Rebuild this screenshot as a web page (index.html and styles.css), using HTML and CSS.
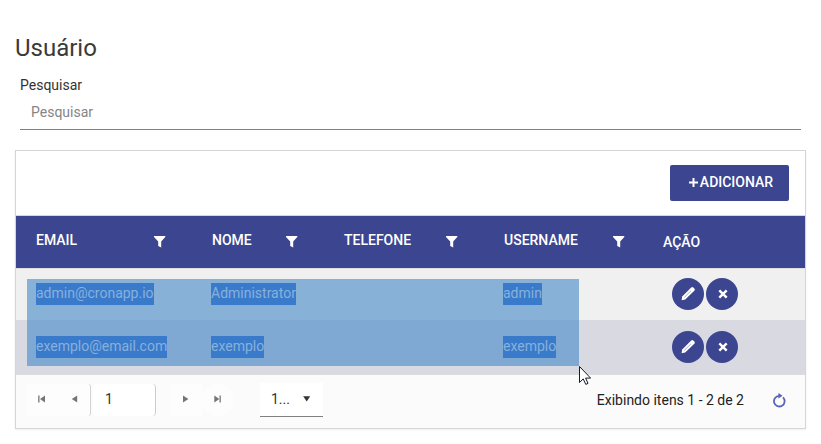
FILE: index.html
```html
<!DOCTYPE html>
<html lang="pt-BR">
<head>
<meta charset="utf-8">
<title>Usuário</title>
<link rel="stylesheet" href="styles.css">
</head>
<body>
<svg class="defs" aria-hidden="true">
  <symbol id="filter" viewBox="0 0 12 12"><path d="M0 0h11.3v1.1L7.2 5.4v6.2L4.2 10V5.4L0 1.1z"/></symbol>
  <symbol id="pencil" viewBox="0 0 14 14"><path d="M10.2.6a1.5 1.5 0 0 1 2.1 0l1 1a1.5 1.5 0 0 1 0 2.1L4.2 12.5.6 13.3l.6-3.8z"/><path class="core" d="M3.3 10.4l6.7-6.6"/></symbol>
  <symbol id="times" viewBox="0 0 10 10"><path d="M1.3 1.3l7.4 7.4M8.7 1.3l-7.4 7.4"/></symbol>
</svg>
<h1>Usuário</h1>
<div class="search">
  <label for="q">Pesquisar</label>
  <input id="q" type="text" placeholder="Pesquisar">
</div>
<main class="grid">
  <div class="toolbar"><button class="add"><svg width="9" height="9" viewBox="0 0 9 9"><path d="M4.5 0v9M0 4.5h9"/></svg>ADICIONAR</button></div>
  <div class="row head">
    <div>EMAIL<svg><use href="#filter"/></svg></div>
    <div>NOME<svg><use href="#filter"/></svg></div>
    <div>TELEFONE<svg><use href="#filter"/></svg></div>
    <div>USERNAME<svg><use href="#filter"/></svg></div>
    <div class="act">AÇÃO</div>
  </div>
  <div class="rows">
    <div class="row one">
      <div><span>admin@cronapp.io</span></div><div><span>Administrator</span></div><div></div><div><span>admin</span></div>
      <div class="buttons"><button><svg class="pen"><use href="#pencil"/></svg></button><button><svg class="x"><use href="#times"/></svg></button></div>
    </div>
    <div class="row two">
      <div><span>exemplo@email.com</span></div><div><span>exemplo</span></div><div></div><div><span>exemplo</span></div>
      <div class="buttons"><button><svg class="pen"><use href="#pencil"/></svg></button><button><svg class="x"><use href="#times"/></svg></button></div>
    </div>
    <div class="marquee"></div>
    <svg class="cursor" viewBox="0 0 12 19"><path d="M.5.5v16l3.7-3.6 2.6 5.5 2.2-1-2.4-5.3h5z"/></svg>
  </div>
  <div class="pager">
    <div class="prev">
      <svg viewBox="0 0 32 32"><path d="M12.2 11.5h1.3v7h-1.3zM19 11.5v7l-5-3.5z"/></svg>
      <svg viewBox="0 0 32 32"><path d="M19.2 11.5v7l-5.4-3.5z"/></svg>
    </div>
    <div class="page">1</div>
    <div class="next">
      <svg viewBox="0 0 32 32"><path d="M13 11.5v7l5.4-3.5z"/></svg>
      <svg class="last" viewBox="0 0 32 32"><path d="M12.3 11.5v7l5-3.5zM17.5 11.5h1.3v7h-1.3z"/></svg>
    </div>
    <div class="size">1...<svg viewBox="0 0 8 6"><path d="M.2.2h7L3.7 5.6z"/></svg></div>
    <div class="info">Exibindo itens 1 - 2 de 2</div>
    <svg class="refresh" viewBox="0 0 14 15"><path d="M11 4.4A5.3 5.3 0 1 1 7.2 2.9"/><path class="tip" d="M6.4 0l4.2 2.7-4.2 2.8z"/></svg>
  </div>
</main>
</body>
</html>
```
FILE: styles.css
```css
* { box-sizing: border-box; }
body { margin: 0; padding: 33px 15px 0; width: 821px; height: 444px; overflow: hidden; background: #fff; color: #333; font: 14px/20px Roboto, sans-serif; }
.defs { display: none; }
h1 { margin: 0; font-size: 24px; line-height: 30px; font-weight: 400; color: #3a3a3a; }
.search { margin: 12px 5px 0; display: flex; flex-direction: column; }
input { height: 35px; padding: 0 11px; border: 0; border-bottom: 1px solid #808080; outline: 0; font: inherit; background: none; }
input::placeholder { color: #858585; }
.grid { margin-top: 20px; width: 791px; height: 279px; border: 1px solid #d5d5d5; box-shadow: 0 1px 2px #0001; }
.toolbar { height: 65px; padding: 14px 16px 0; display: flex; justify-content: flex-end; border-bottom: 1px solid #d8d8d8; }
button { border: 0; background: #3c458f; color: #fff; font: 14px/20px Roboto, sans-serif; }
.add { width: 119px; height: 36px; border-radius: 2px; font-weight: 500; display: flex; align-items: center; justify-content: center; gap: 2px; padding: 0 0 2px 3px; }
.add svg { stroke: #fff; stroke-width: 2; }
.row { display: grid; grid-template-columns: 175px 133px 160px 167px 1fr; }
.head { height: 52px; background: #3c458f; color: #fff; font-weight: 500; }
.head div { display: flex; justify-content: space-between; padding: 14px 25px 0 20px; }
.head div:nth-child(2) { padding-left: 21px; padding-right: 26px; }
.head div:nth-child(3), .head div:nth-child(4) { padding-right: 26px; }
.head .act { padding: 16px 0 0 12px; }
.head svg { width: 12px; height: 12px; fill: #fff; margin-top: 6px; }
.rows { position: relative; }
.one { height: 52px; background: #f0f0f0; border-top: 1px solid #dedee3; }
.two { height: 54px; background: #d9d9e2; }
.row > div { min-width: 0; }
.one > div, .two > div { padding: 14px 0 0 20px; }
.one > div:nth-child(4), .two > div:nth-child(4) { padding-left: 19px; }
.two > div { padding-top: 16px; }
.row span { position: relative; z-index: 2; display: inline-block; height: 22px; line-height: 21px; background: #3a7acb; color: #86b1dc; }
.row > .buttons { display: flex; gap: 2px; padding: 9px 0 0 21px; }
.two > .buttons { padding-top: 11px; }
.buttons button { width: 32px; height: 32px; border-radius: 50%; padding: 0; display: grid; place-items: center; }
.pen { width: 14px; height: 14px; fill: #fff; }
.core { stroke: #aaafd0; stroke-width: 1; }
.x { width: 10px; height: 10px; stroke: #fff; stroke-width: 2.4; margin-left: 1px; }
.marquee { position: absolute; z-index: 1; left: 11px; top: 11px; width: 552px; height: 87px; background: rgba(67,135,200,.6); }
.cursor { position: absolute; z-index: 3; left: 563px; top: 98px; width: 12px; height: 19px; fill: #fff; stroke: #181828; }
.pager { height: 54px; background: #fbfbfb; border-top: 1px solid #ddd; display: flex; align-items: center; padding: 0 19px 3px 10px; }
.prev, .next { display: flex; height: 32px; background: #fdfdfd; }
.prev { width: 65px; border-right: 1px solid #d2d2d2; border-radius: 3px; }
.prev svg, .next svg { width: 32px; height: 32px; fill: #757575; }
.next { margin-left: 14px; background: none; }
.next svg { background: #fdfdfd; }
.next .last { border-radius: 50%; }
.page { width: 63px; height: 32px; margin-left: 2px; padding: 0 12px; line-height: 31px; background: #fff; border-right: 1px solid #ccc; border-radius: 4px; }
.size { width: 63px; height: 34px; margin-left: 26px; padding: 0 12px 1px 11px; background: #fff; border-bottom: 1px solid #808080; display: flex; align-items: center; justify-content: space-between; }
.size svg { width: 8px; height: 6px; fill: #333; }
.info { margin-left: auto; margin-right: 28px; color: #222; }
.refresh { width: 14px; height: 15px; fill: none; stroke: #5864b5; stroke-width: 1.8; }
.refresh .tip { fill: #5864b5; stroke: none; }
```
